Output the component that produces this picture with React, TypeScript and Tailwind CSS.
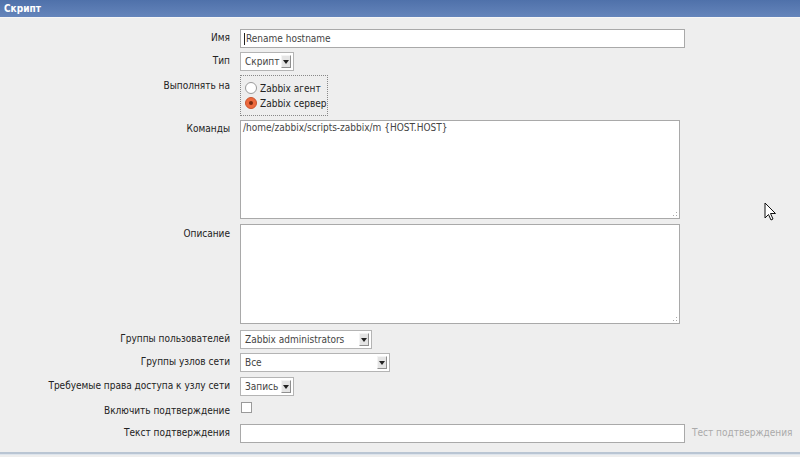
import React from 'react';

const font = { fontFamily: '"DejaVu Sans Condensed", "DejaVu Sans", sans-serif' };

const Label: React.FC<{ children: React.ReactNode; className?: string }> = ({ children, className = '' }) => (
  <div className={`w-[230px] shrink-0 text-right text-[10px] leading-[18px] text-[#222] ${className}`}>{children}</div>
);

const Select: React.FC<{ value: string; width: string }> = ({ value, width }) => (
  <div className={`${width} h-[19px] flex items-center justify-between bg-white border border-[#b4b4b4] pl-[4px] pr-[2px]`}>
    <span className="text-[10px] text-[#444] leading-none">{value}</span>
    <span className="w-[10px] h-[13px] flex items-center justify-center bg-[#e4e4e4] border border-[#8f8f8f] border-t-[#f4f4f4] border-l-[#f4f4f4]">
      <svg width="6" height="4" viewBox="0 0 6 4">
        <path d="M0 0 L6 0 L3 4 Z" fill="#222" />
      </svg>
    </span>
  </div>
);

const Radio: React.FC<{ checked?: boolean; label: string }> = ({ checked, label }) => (
  <div className="flex items-center gap-[3px] h-[15px]">
    {checked ? (
      <span className="w-[12px] h-[12px] rounded-full bg-[#ee6a3e] border border-[#c9542e] flex items-center justify-center">
        <span className="w-[4px] h-[4px] rounded-full bg-[#7a2a10]" />
      </span>
    ) : (
      <span className="w-[12px] h-[12px] rounded-full bg-white border border-[#9a9a9a]" />
    )}
    <span className="text-[10px] text-[#222]">{label}</span>
  </div>
);

const Grip = () => (
  <svg className="absolute right-[1px] bottom-[1px]" width="5" height="5" viewBox="0 0 5 5">
    <rect x="3" y="0" width="1" height="1" fill="#aaa" />
    <rect x="0" y="3" width="1" height="1" fill="#aaa" />
    <rect x="3" y="3" width="1" height="1" fill="#aaa" />
  </svg>
);

export default function App() {
  return (
    <div className="relative w-[800px] h-[457px] overflow-hidden bg-[#eeeeee]" style={font}>
      {/* Header */}
      <div className="h-[18px] bg-gradient-to-b from-[#4f71aa] to-[#6585bb] border-b border-[#f6f6f6] flex items-center pl-[4px]">
        <span className="text-white font-bold text-[10px]">Скрипт</span>
      </div>

      <div className="flex flex-col">
        <div className="flex items-start gap-[10px] mt-[11px]">
          <Label>Имя</Label>
          <div className="w-[445px] h-[19px] bg-white border border-[#a9a9a9] flex items-center pl-[3px]">
            <span className="w-px h-[12px] bg-[#222]" />
            <span className="text-[10px] text-[#444] ml-px">Rename hostname</span>
          </div>
        </div>

        <div className="flex items-start gap-[10px] mt-[4px]">
          <Label>Тип</Label>
          <Select value="Скрипт" width="w-[54px]" />
        </div>

        <div className="flex items-start gap-[10px] mt-[4px]">
          <Label className="pt-[2px]">Выполнять на</Label>
          <div className="w-[88px] h-[41px] border border-dotted border-[#888] flex flex-col justify-center pl-[4px]">
            <Radio label="Zabbix агент" />
            <Radio checked label="Zabbix сервер" />
          </div>
        </div>

        <div className="flex items-start gap-[10px] mt-[4px]">
          <Label>Команды</Label>
          <div className="relative w-[440px] h-[99px] bg-white border border-[#a9a9a9] px-[2px] pt-px">
            <div className="text-[10px] text-[#444] leading-[12px]">/home/zabbix/scripts-zabbix/m {'{HOST.HOST}'}</div>
            <Grip />
          </div>
        </div>

        <div className="flex items-start gap-[10px] mt-[5px]">
          <Label className="pt-px">Описание</Label>
          <div className="relative w-[440px] h-[100px] bg-white border border-[#a9a9a9]">
            <Grip />
          </div>
        </div>

        <div className="flex items-start gap-[10px] mt-[6px]">
          <Label>Группы пользователей</Label>
          <Select value="Zabbix administrators" width="w-[132px]" />
        </div>

        <div className="flex items-start gap-[10px] mt-[4px]">
          <Label>Группы узлов сети</Label>
          <Select value="Все" width="w-[150px]" />
        </div>

        <div className="flex items-start gap-[10px] mt-[5px]">
          <Label>Требуемые права доступа к узлу сети</Label>
          <Select value="Запись" width="w-[54px]" />
        </div>

        <div className="flex items-start gap-[10px] mt-[5px]">
          <Label className="pt-px">Включить подтверждение</Label>
          <span className="mt-[1px] ml-px w-[11px] h-[11px] bg-white border border-[#9a9a9a]" />
        </div>

        <div className="flex items-start gap-[10px] mt-[4px]">
          <Label>Текст подтверждения</Label>
          <div className="w-[445px] h-[19px] bg-white border border-[#a9a9a9]" />
          <span className="text-[10px] leading-[18px] text-[#aaa] ml-[-3px]">Тест подтверждения</span>
        </div>

        <div className="mt-[9px] h-[3px] border-t-2 border-[#b9c5d3] bg-[#dde4ec]" />
      </div>

      {/* Mouse cursor */}
      <svg className="absolute left-[764px] top-[202px]" width="13" height="20" viewBox="0 0 13 20">
        <path d="M1 1 L1 16 L4.5 12.5 L7 18 L9 17 L6.5 11.5 L11.5 11.5 Z" fill="#fff" stroke="#111" strokeWidth="1" strokeLinejoin="round" />
      </svg>
    </div>
  );
}
